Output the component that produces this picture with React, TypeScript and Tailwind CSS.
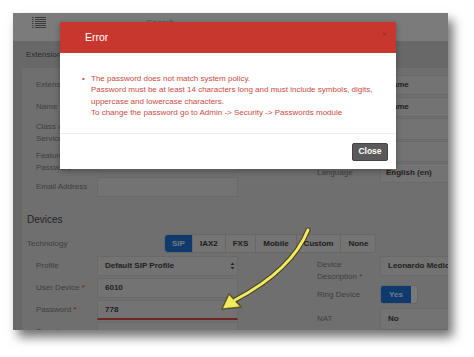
import React from 'react'

const font = { fontFamily: '"Liberation Sans", Arial, sans-serif' }

function Field({ label, value, req, bold = true }: { label: React.ReactNode; value?: string; req?: boolean; bold?: boolean }) {
  return (
    <div className="flex h-[20px] items-center">
      <div className="w-[61px] shrink-0 whitespace-nowrap text-[8px] text-[#808080]">
        {label}
        {req && <span className="text-[#e04040]"> *</span>}
      </div>
      <div className={`flex h-[20px] w-[141px] shrink-0 items-center border border-[#d2d2d2] bg-[#e6e6e6] px-[7px] text-[8px] text-[#444] ${bold ? 'font-bold' : ''}`}>
        {value}
      </div>
    </div>
  )
}

function RightInput({ value, className = '' }: { value?: string; className?: string }) {
  return (
    <div className={`ml-[63px] flex h-[20px] w-[120px] shrink-0 items-center border border-[#d2d2d2] bg-[#e6e6e6] px-[6px] text-[8px] font-bold text-[#444] ${className}`}>
      {value}
    </div>
  )
}

export default function App() {
  const techs = ['SIP', 'IAX2', 'FXS', 'Mobile', 'Custom', 'None']
  return (
    <div className="relative h-[357px] w-[474px] overflow-hidden bg-white pl-[13px] pt-[13px]" style={font}>
      <div className="relative h-[317px] w-[435px] overflow-hidden bg-[#d0d0d0] shadow-[5px_7px_10px_rgba(0,0,0,0.55)]">
        {/* top bar */}
        <div className="flex h-[28px] items-start bg-[#f6f6f6] pl-[19px] pt-[4px]">
          <svg width="14" height="11" viewBox="0 0 14 11" className="text-[#777]">
            {[0.5, 2.5, 4.5, 6.5, 8.5, 10.5].map((y) => (
              <g key={y}>
                <rect x="0" y={y - 0.5} width="1.5" height="1" fill="currentColor" />
                <rect x="3" y={y - 0.5} width="11" height="1" fill="currentColor" />
              </g>
            ))}
          </svg>
          <span className="ml-[100px] mt-[-0.5px] text-[9px] text-[#a8a8a8]">Search</span>
        </div>

        {/* tab band */}
        <div className="flex h-[27px] items-center pl-[13px] text-[8px] text-[#5a5a5a]">Extension Settings</div>

        {/* form panel */}
        <div className="ml-[9px] h-[262px] overflow-hidden bg-[#dedede] pt-[7px]">
          <div className="flex">
            <div className="flex w-[295px] shrink-0 flex-col pl-[14px]">
              <Field label="Extension" value="6010" />
              <div className="mt-[2px]">
                <Field label="Name" req value="Leonardo" />
              </div>
              <div className="mt-[1px] flex h-[30px] items-center">
                <div className="w-[61px] shrink-0 text-[8px] leading-[12px] text-[#808080]">
                  Class of
                  <br />
                  Service
                </div>
                <div className="flex h-[20px] w-[141px] items-center border border-[#d2d2d2] bg-[#e6e6e6] px-[7px] text-[8px] font-bold text-[#444]">Default</div>
              </div>
              <div className="flex h-[28px] items-center">
                <div className="w-[61px] shrink-0 text-[8px] leading-[12px] text-[#808080]">
                  Feature
                  <br />
                  Password
                </div>
                <div className="h-[20px] w-[141px] border border-[#d2d2d2] bg-[#e6e6e6]" />
              </div>
              <div className="mt-[1px]">
                <Field label="Email Address" />
              </div>
            </div>
            <div className="flex shrink-0 flex-col">
              <RightInput value="Name" />
              <RightInput value="Name" className="mt-[2px]" />
              <RightInput className="mt-[1px] h-[22px]" />
              <RightInput className="mt-[1px] h-[21px]" />
              <div className="mt-[1px] flex h-[20px] items-center">
                <div className="w-[63px] shrink-0 text-[8px] text-[#808080]">Language</div>
                <div className="flex h-[20px] w-[120px] shrink-0 items-center border border-[#d2d2d2] bg-[#e6e6e6] px-[5px] text-[8px] font-bold text-[#444]">
                  English (en)
                </div>
              </div>
            </div>
          </div>

          {/* Devices */}
          <div className="mt-[16px] pl-[5px] text-[10px] leading-[14px] text-[#4a4a4a]">Devices</div>
          <div className="mt-[7px] flex h-[19px] items-center pl-[5px]">
            <div className="w-[137px] shrink-0 text-[8px] text-[#808080]">Technology</div>
            <div className="flex h-[19px] rounded-[3px] border border-[#cfcfcf] bg-[#e8e8e8]">
              {techs.map((t, i) => (
                <div
                  key={t}
                  className={`flex items-center px-[7px] text-[8px] font-bold ${i === 0 ? 'rounded-l-[3px] bg-[#1e74dc] text-[#e8f0ff]' : 'border-l border-[#cfcfcf] text-[#3a3a3a]'}`}
                >
                  {t}
                </div>
              ))}
            </div>
          </div>
          <div className="mt-[3px] flex">
            <div className="flex w-[295px] shrink-0 flex-col gap-[2px] pl-[14px]">
              <div className="flex h-[20px] items-center">
                <div className="w-[61px] shrink-0 text-[8px] text-[#808080]">Profile</div>
                <div className="flex h-[20px] w-[141px] items-center justify-between border border-[#d2d2d2] bg-[#e6e6e6] pl-[7px] pr-[2px] text-[8px] font-bold text-[#444]">
                  Default SIP Profile
                  <svg width="5" height="8" viewBox="0 0 5 8">
                    <path d="M0.5 3 L2.5 0.5 L4.5 3 Z M0.5 5 L2.5 7.5 L4.5 5 Z" fill="#555" />
                  </svg>
                </div>
              </div>
              <Field label="User Device" req value="6010" />
              <div className="flex h-[20px] items-center">
                <div className="w-[61px] shrink-0 text-[8px] text-[#808080]">
                  Password<span className="text-[#e04040]"> *</span>
                </div>
                <div className="flex h-[20px] w-[141px] items-center border border-b-2 border-[#d2d2d2] border-b-[#e24a4a] bg-[#e6e6e6] px-[7px] text-[8px] font-bold text-[#444]">
                  778
                </div>
              </div>
              <Field label="Secret" />
            </div>
            <div className="flex shrink-0 flex-col">
              <div className="flex h-[24px] items-start">
                <div className="w-[63px] shrink-0 pt-[3px] text-[8px] leading-[12px] text-[#808080]">
                  Device
                  <br />
                  Description *
                </div>
                <div className="flex h-[20px] w-[120px] shrink-0 items-center whitespace-nowrap border border-[#d2d2d2] bg-[#e6e6e6] px-[7px] text-[8px] font-bold text-[#444]">
                  Leonardo Medici
                </div>
              </div>
              <div className="mt-[5px] flex h-[19px] items-center">
                <div className="w-[63px] shrink-0 text-[8px] text-[#808080]">Ring Device</div>
                <div className="flex h-[19px] w-[38px] overflow-hidden rounded-[3px] border border-[#cfcfcf]">
                  <div className="flex w-[30px] items-center justify-center bg-[#1e74dc] text-[8px] font-bold text-[#e8f0ff]">Yes</div>
                  <div className="flex-1 rounded-r-[3px] bg-[#f2f2f2]" />
                </div>
              </div>
              <div className="mt-[4px] flex h-[22px] items-center">
                <div className="w-[63px] shrink-0 text-[8px] text-[#808080]">NAT</div>
                <div className="flex h-[22px] w-[120px] shrink-0 items-center border border-[#d2d2d2] bg-[#e6e6e6] px-[7px] text-[8px] font-bold text-[#444]">
                  No
                </div>
              </div>
            </div>
          </div>
        </div>

        {/* backdrop */}
        <div className="absolute inset-0 bg-black/50" />

        {/* modal */}
        <div className="absolute left-[47px] top-[9px] flex h-[147px] w-[336px] flex-col bg-white shadow-[0_2px_6px_rgba(0,0,0,0.3)]">
          <div className="relative flex h-[31px] items-center bg-[#c8372d] pl-[25px] text-[10.5px] text-white">
            Error
            <span className="absolute right-[9px] top-[8px] text-[9px] leading-none text-black/25">×</span>
          </div>
          <div className="flex h-[80px] pl-[22px] pt-[20px] text-[8px] leading-[11.3px] text-[#cb4a40]">
            <span className="w-[9px]">•</span>
            <div>
              The password does not match system policy.
              <br />
              Password must be at least 14 characters long and must include symbols, digits,
              <br />
              uppercase and lowercase characters.
              <br />
              To change the password go to Admin -&gt; Security -&gt; Passwords module
            </div>
          </div>
          <div className="flex flex-1 items-center justify-end border-t border-[#ececec] pr-[8px]">
            <div className="flex h-[18px] w-[36px] items-center justify-center rounded-[2px] border border-[#444] bg-[#5a5a5a] text-[8.5px] font-bold text-white">
              Close
            </div>
          </div>
        </div>
      </div>

      {/* annotation arrow */}
      <svg className="absolute left-0 top-0" width="474" height="357" viewBox="0 0 474 357">
        <path d="M308 230 Q292 270 235 300" fill="none" stroke="rgba(40,40,0,0.6)" strokeWidth="5" strokeLinecap="round" />
        <path d="M222 309 L229 294 L241 307 Z" fill="#f3ea5f" stroke="rgba(40,40,0,0.6)" strokeWidth="1.5" strokeLinejoin="round" />
        <path d="M308 230 Q292 270 235 300" fill="none" stroke="#f3ea5f" strokeWidth="3" strokeLinecap="round" />
      </svg>
    </div>
  )
}
